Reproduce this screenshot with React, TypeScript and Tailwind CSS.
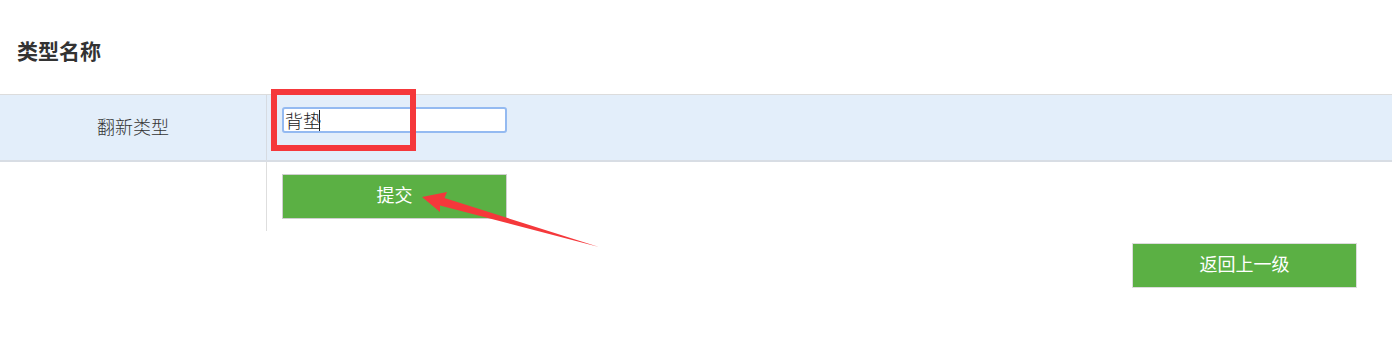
export default function App() {
  const font = { fontFamily: '"Liberation Sans", "Noto Sans CJK SC", sans-serif' };

  return (
    <div className="relative w-[1392px] h-[363px] bg-white text-[#333]" style={font}>
      {/* header */}
      <div className="h-[94px] pl-[17px] pt-[37px]">
        <h1 className="text-[21px] leading-[30px] font-bold text-[#333]">类型名称</h1>
      </div>

      {/* form table */}
      <div className="border-t border-[#dcdcdc]">
        <div className="flex h-[67px] bg-[#e3eefa] border-b-2 border-[#d8dde4]">
          <div className="w-[267px] border-r border-[#d6dbe2] flex items-center justify-center">
            <span className="text-[18px] font-light mt-[1px]">翻新类型</span>
          </div>
          <div className="flex-1 pl-[15px] pt-[12px]">
            <div className="relative w-[225px]">
              <input
                defaultValue="背垫"
                className="w-[225px] h-[26px] px-[1px] bg-white border-2 border-[#94baf1] rounded-[3px] text-[18px] leading-[22px] font-light text-[#222] outline-none"
                style={font}
              />
              <span className="absolute left-[37px] top-[3px] w-px h-[21px] bg-[#222]" />
            </div>
          </div>
        </div>
        <div className="flex h-[69px]">
          <div className="w-[267px] border-r border-[#dedede]" />
          <div className="flex-1 pl-[15px] pt-[12px]">
            <button className="w-[225px] h-[45px] bg-[#5bb044] border border-[#cfcfcf] text-white text-[18px]">
              提交
            </button>
          </div>
        </div>
      </div>

      <div className="flex justify-end pr-[35px] pt-[12px]">
        <button className="w-[225px] h-[45px] bg-[#5bb044] border border-[#dcdcdc] text-white text-[18px]">
          返回上一级
        </button>
      </div>

      {/* annotations */}
      <div className="absolute left-[271px] top-[89px] w-[145px] h-[62px] border-[6px] border-[#f5383b] pointer-events-none" />
      <svg className="absolute left-0 top-0 pointer-events-none" width="1392" height="363">
        <polygon
          points="422,197 447,192 444.5,198 599,247 440,205.5 440,212"
          fill="#f5383b"
        />
      </svg>
    </div>
  );
}
